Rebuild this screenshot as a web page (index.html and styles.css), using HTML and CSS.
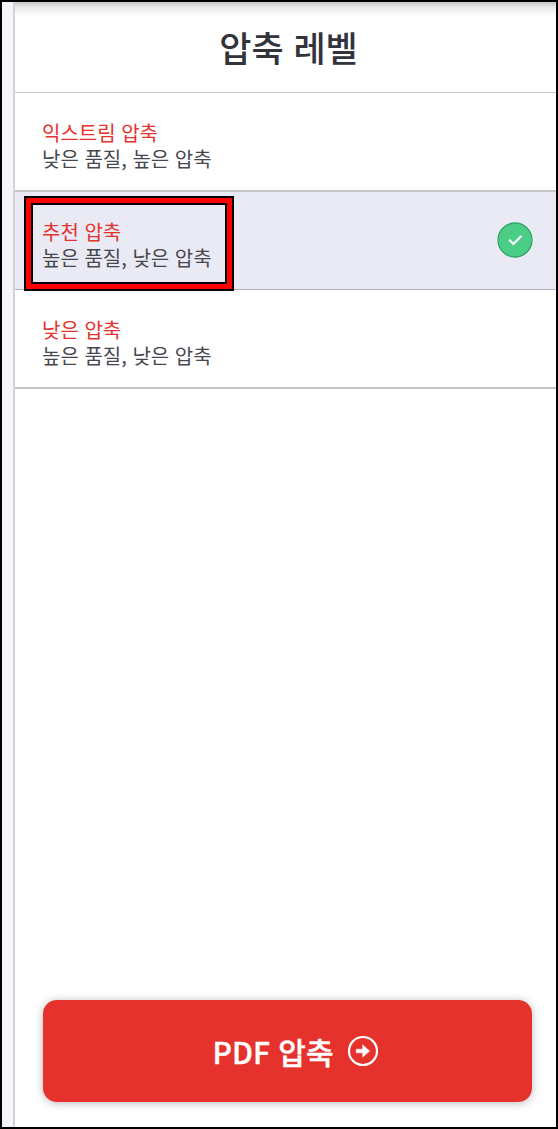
FILE: index.html
```
<!DOCTYPE html>
<html lang="ko">
<head>
    <meta charset="UTF-8">
    <meta name="viewport" content="width=device-width, initial-scale=1.0">
    <title>PDF 압축</title>
    <link rel="stylesheet" href="styles.css">
</head>
<body>
    <div class="frame">
        <aside class="sidebar">
            <!-- Header -->
            <header class="sidebar-header">
                <h1>압축 레벨</h1>
            </header>

            <!-- Compression levels -->
            <ul class="levels">
                <li class="level">
                    <div class="level-text">
                        <h2>익스트림 압축</h2>
                        <p>낮은 품질, 높은 압축</p>
                    </div>
                </li>
                <li class="level active">
                    <div class="level-text">
                        <h2>추천 압축</h2>
                        <p>높은 품질, 낮은 압축</p>
                        <span class="highlight"></span>
                    </div>
                    <svg class="check" width="36" height="36" viewBox="0 0 36 36">
                        <circle cx="18" cy="18" r="17" fill="#4ccd86" stroke="#2fa866" stroke-width="1.3"/>
                        <path d="M12.2 17.8l4.3 4.2 8-8.2" fill="none" stroke="#fff" stroke-width="2.2"/>
                    </svg>
                </li>
                <li class="level">
                    <div class="level-text">
                        <h2>낮은 압축</h2>
                        <p>높은 품질, 낮은 압축</p>
                    </div>
                </li>
            </ul>

            <!-- Action -->
            <button class="compress-btn" type="button">
                <span>PDF 압축</span>
                <svg width="32" height="32" viewBox="0 0 32 32">
                    <circle cx="16" cy="16" r="14" fill="none" stroke="#fff" stroke-width="2.2"/>
                    <path d="M9.3 14.2h6.4V9.9l6.9 6.1-6.9 6.1v-4.3H9.3z" fill="#fff" stroke="#fff" stroke-width=".6" stroke-linejoin="round"/>
                </svg>
            </button>
        </aside>
    </div>
</body>
</html>
```
FILE: styles.css
```
/* Reset */
* {
    margin: 0;
    padding: 0;
    box-sizing: border-box;
}

/* Body */
body {
    font-family: "Noto Sans CJK KR", "Noto Sans", sans-serif;
    color: #47474f;
}

.frame {
    height: 1129px;
    padding-left: 11px;
    border: 2px solid #000;
    background-color: #f5f4fa;
}

/* Sidebar */
.sidebar {
    height: 100%;
    display: flex;
    flex-direction: column;
    border-left: 2px solid #d3d3d6;
    background-color: #fff;
}

.sidebar-header {
    height: 91px;
    border-bottom: 1px solid #c6c6c6;
    background: linear-gradient(#c4c4c4, #e8e8e8 5px, #fff 14px);
    text-align: center;
}

.sidebar-header h1 {
    padding-left: 6px;
    font-size: 35px;
    font-weight: 500;
    line-height: 89px;
    color: #33333b;
}

/* Levels */
.levels {
    list-style: none;
}

.level {
    height: 98.5px;
    padding: 0 23px 0 27px;
    display: flex;
    justify-content: space-between;
    align-items: center;
    border-bottom: 2px solid #c3c3c9;
}

.level.active {
    background-color: #eaeaf4;
    border-bottom: 1px solid #b3b3bb;
}

.level-text {
    position: relative;
    padding-top: 9px;
    font-size: 20px;
    line-height: 26px;
}

.level h2 {
    font-size: 20px;
    font-weight: 400;
    color: #e5322d;
}

/* Red marker around the recommended level */
.highlight {
    position: absolute;
    top: -14px;
    left: -18px;
    width: 210px;
    height: 95px;
    border: 2px solid #000;
    box-shadow: inset 0 0 0 5px #f00, inset 0 0 0 7px #000;
}

/* Button */
.compress-btn {
    height: 102px;
    margin: auto 24px 25px 28px;
    padding-left: 16px;
    display: flex;
    justify-content: center;
    align-items: center;
    gap: 13px;
    border: none;
    border-radius: 14px;
    background-color: #e5322d;
    box-shadow: 0 1px 10px rgba(0, 0, 0, 0.28);
    color: #fff;
    font-family: inherit;
    font-size: 30px;
    font-weight: 500;
    -webkit-text-stroke: 0.4px #fff;
    cursor: pointer;
}
```
